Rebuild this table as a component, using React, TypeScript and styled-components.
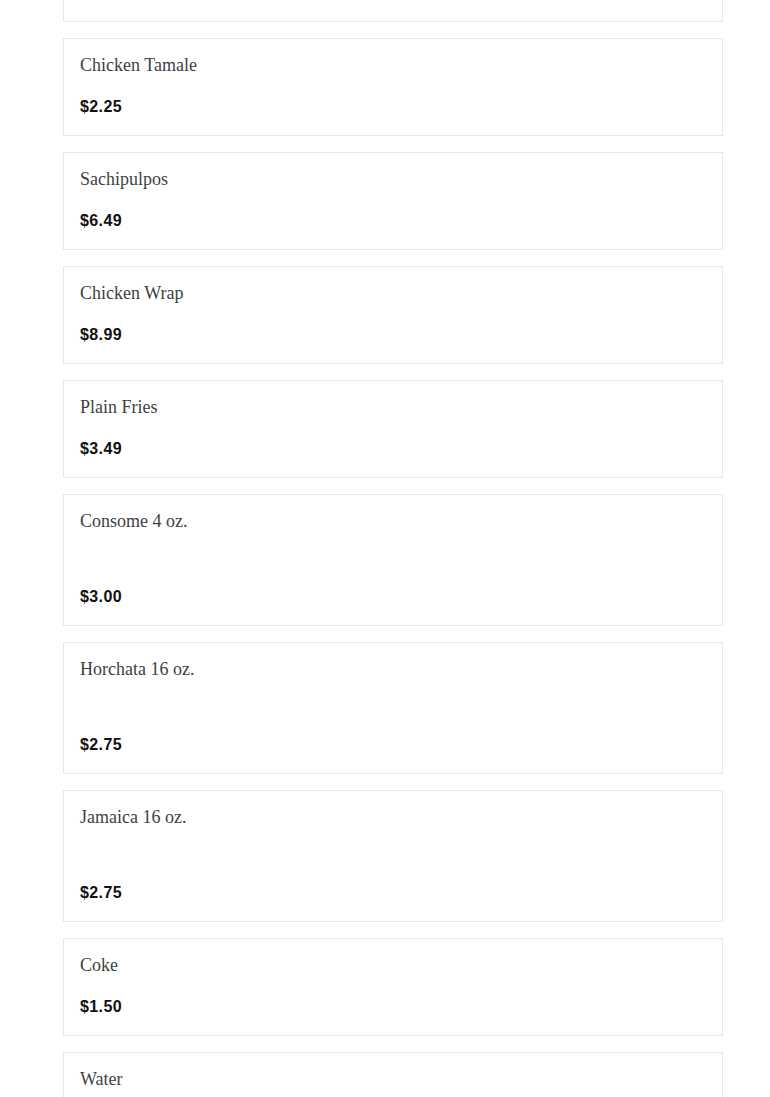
import styled, { createGlobalStyle } from "styled-components";

/***** Styled ******/
const GlobalStyle = createGlobalStyle`
  html, body {
    margin: 0;
    padding: 0;
    background: #ffffff;
  }
  body {
    font-family: "Liberation Sans", Arial, sans-serif;
    overflow: hidden;
  }
`;
const Menu = styled.ul`
  list-style: none;
  margin: -76px 0 0 0;
  padding: 0 0 0 63px;
  display: flex;
  flex-direction: column;
  gap: 16px;
`;
const Item = styled.li`
  box-sizing: border-box;
  width: 660px;
  border: 1px solid #e6e6e6;
  padding: 16px 16px 18px;
  display: flex;
  flex-direction: column;
`;
const Name = styled.h3`
  margin: 0;
  font-family: "Liberation Serif", "Times New Roman", serif;
  font-weight: 400;
  font-size: 18px;
  line-height: 20px;
  color: #3f3f3f;
`;
const Description = styled.p<{ $empty: boolean }>`
  margin: 0;
  height: ${(p) => (p.$empty ? "34px" : "0")};
`;
const Price = styled.span`
  margin-top: 22px;
  font-family: "Liberation Sans", Arial, sans-serif;
  font-weight: 700;
  font-size: 16px;
  letter-spacing: 0.4px;
  line-height: 20px;
  color: #111111;
`;

/***** Types ******/
interface MenuItem {
  name: string;
  price: string;
  tall?: boolean;
}

const items: MenuItem[] = [
  { name: "Cheese Tamale", price: "$2.25" },
  { name: "Chicken Tamale", price: "$2.25" },
  { name: "Sachipulpos", price: "$6.49" },
  { name: "Chicken Wrap", price: "$8.99" },
  { name: "Plain Fries", price: "$3.49" },
  { name: "Consome 4 oz.", price: "$3.00", tall: true },
  { name: "Horchata 16 oz.", price: "$2.75", tall: true },
  { name: "Jamaica 16 oz.", price: "$2.75", tall: true },
  { name: "Coke", price: "$1.50" },
  { name: "Water", price: "$1.00" },
];

function App() {
  return (
    <>
      <GlobalStyle />
      <Menu>
        {items.map((item) => (
          <Item key={item.name}>
            <Name>{item.name}</Name>
            <Description $empty={!!item.tall} />
            <Price>{item.price}</Price>
          </Item>
        ))}
      </Menu>
    </>
  );
}

export default App;
